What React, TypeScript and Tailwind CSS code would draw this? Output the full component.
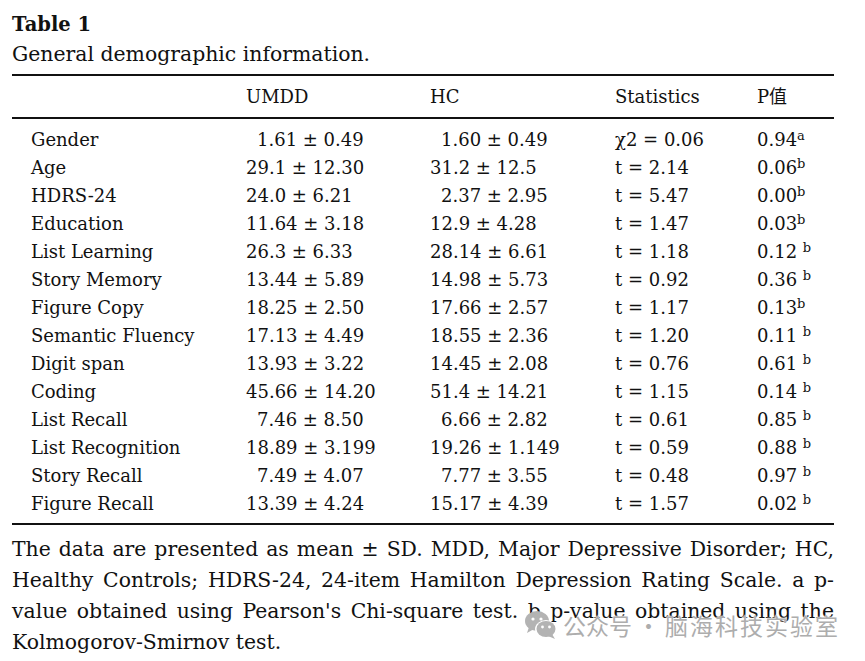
type Row = {
    label: string
    umdd: string
    umddPad?: boolean
    hc: string
    hcPad?: boolean
    stat: string
    p: string
    sup: string
}

const rows: Row[] = [
    { label: "Gender", umdd: "1.61 ± 0.49", umddPad: true, hc: "1.60 ± 0.49", hcPad: true, stat: "χ2 = 0.06", p: "0.94", sup: "a" },
    { label: "Age", umdd: "29.1 ± 12.30", hc: "31.2 ± 12.5", stat: "t = 2.14", p: "0.06", sup: "b" },
    { label: "HDRS-24", umdd: "24.0 ± 6.21", hc: "2.37 ± 2.95", hcPad: true, stat: "t = 5.47", p: "0.00", sup: "b" },
    { label: "Education", umdd: "11.64 ± 3.18", hc: "12.9 ± 4.28", stat: "t = 1.47", p: "0.03", sup: "b" },
    { label: "List Learning", umdd: "26.3 ± 6.33", hc: "28.14 ± 6.61", stat: "t = 1.18", p: "0.12 ", sup: "b" },
    { label: "Story Memory", umdd: "13.44 ± 5.89", hc: "14.98 ± 5.73", stat: "t = 0.92", p: "0.36 ", sup: "b" },
    { label: "Figure Copy", umdd: "18.25 ± 2.50", hc: "17.66 ± 2.57", stat: "t = 1.17", p: "0.13", sup: "b" },
    { label: "Semantic Fluency", umdd: "17.13 ± 4.49", hc: "18.55 ± 2.36", stat: "t = 1.20", p: "0.11 ", sup: "b" },
    { label: "Digit span", umdd: "13.93 ± 3.22", hc: "14.45 ± 2.08", stat: "t = 0.76", p: "0.61 ", sup: "b" },
    { label: "Coding", umdd: "45.66 ± 14.20", hc: "51.4 ± 14.21", stat: "t = 1.15", p: "0.14 ", sup: "b" },
    { label: "List Recall", umdd: "7.46 ± 8.50", umddPad: true, hc: "6.66 ± 2.82", hcPad: true, stat: "t = 0.61", p: "0.85 ", sup: "b" },
    { label: "List Recognition", umdd: "18.89 ± 3.199", hc: "19.26 ± 1.149", stat: "t = 0.59", p: "0.88 ", sup: "b" },
    { label: "Story Recall", umdd: "7.49 ± 4.07", umddPad: true, hc: "7.77 ± 3.55", hcPad: true, stat: "t = 0.48", p: "0.97 ", sup: "b" },
    { label: "Figure Recall", umdd: "13.39 ± 4.24", hc: "15.17 ± 4.39", stat: "t = 1.57", p: "0.02 ", sup: "b" },
]

function WeChatIcon() {
    return (
        <svg width="34" height="30" viewBox="0 0 34 30">
            <ellipse cx="13" cy="11" rx="12" ry="10" fill="#b3b3b3" />
            <path d="M5 17 L3 23 L10 19 Z" fill="#b3b3b3" />
            <circle cx="9" cy="9" r="1.6" fill="#fff" />
            <circle cx="17" cy="9" r="1.6" fill="#fff" />
            <ellipse cx="22" cy="19" rx="11" ry="9" fill="#fff" />
            <ellipse cx="22" cy="19" rx="9.5" ry="8" fill="#b3b3b3" />
            <path d="M28 24 L31 29 L24 26 Z" fill="#b3b3b3" />
            <circle cx="18.5" cy="17" r="1.4" fill="#fff" />
            <circle cx="25.5" cy="17" r="1.4" fill="#fff" />
        </svg>
    )
}

export default function App() {
    return (
        <div className="relative h-[661px] w-[865px] overflow-hidden bg-white px-3 text-[#111] font-['DejaVu_Serif','Noto_Sans_CJK_SC',serif]">
            <h1 className="mt-[12px] text-[19.5px] font-bold leading-[26px]">Table 1</h1>
            <p className="mt-[2px] text-[20.4px] leading-[28px]">General demographic information.</p>

            <div className="mt-[6px] w-[822px] border-t-2 border-[#111]">
                <div className="grid h-[41px] grid-cols-[234px_184px_185px_142px_77px] items-center text-[18px] leading-[41px]">
                    <div />
                    <div>UMDD</div>
                    <div>HC</div>
                    <div>Statistics</div>
                    <div>P值</div>
                </div>
                <div className="border-t-2 border-[#111] pb-[5px] pt-[7px]">
                    {rows.map((r) => (
                        <div
                            key={r.label}
                            className="grid h-[28px] grid-cols-[234px_184px_185px_142px_77px] whitespace-pre text-[18px] leading-[28px]"
                        >
                            <div className="pl-[19px]">{r.label}</div>
                            <div className={r.umddPad ? "pl-[11px]" : ""}>{r.umdd}</div>
                            <div className={r.hcPad ? "pl-[11px]" : ""}>{r.hc}</div>
                            <div>{r.stat}</div>
                            <div>
                                {r.p}
                                <sup className="text-[13px]">{r.sup}</sup>
                            </div>
                        </div>
                    ))}
                </div>
                <div className="border-t-2 border-[#111]" />
            </div>

            <div className="mt-[9px] w-[822px] text-[20.4px] leading-[31px]">
                <div className="text-justify [text-align-last:justify]">
                    The data are presented as mean ± SD. MDD, Major Depressive Disorder; HC,
                </div>
                <div className="text-justify [text-align-last:justify]">
                    Healthy Controls; HDRS-24, 24-item Hamilton Depression Rating Scale. a p-
                </div>
                <div className="text-justify [text-align-last:justify]">
                    value obtained using Pearson's Chi-square test. b p-value obtained using the
                </div>
                <div>Kolmogorov-Smirnov test.</div>
            </div>

            <div className="absolute left-[524px] top-[610px] flex items-center text-[23px] leading-[30px] text-[#adadad] font-['Noto_Sans_CJK_SC',sans-serif] [text-shadow:0_0_2px_#fff,0_0_2px_#fff]">
                <WeChatIcon />
                <span className="ml-[5px]">公众号</span>
                <span className="mx-[5px]">·</span>
                <span className="tracking-[2px]">脑海科技实验室</span>
            </div>
        </div>
    )
}
